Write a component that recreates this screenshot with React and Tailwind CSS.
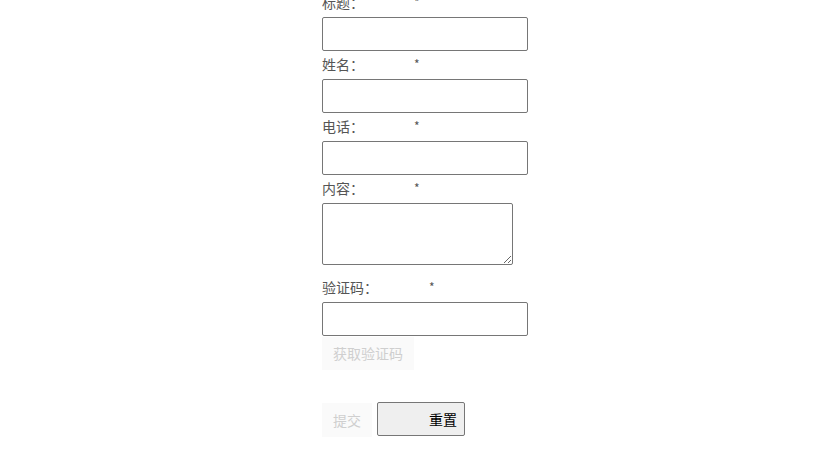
import React from 'react';

const font = { fontFamily: '"Noto Sans CJK SC", "Noto Sans", sans-serif' };

const Label = ({ text, gap = 'ml-[50px]' }) => (
  <div className="h-[28px] flex items-center pb-[2px] text-[14px] text-[#555]">
    <span>{text}</span>
    <span className={`${gap} text-[12px] text-[#555]`}>*</span>
  </div>
);

const Input = () => (
  <input
    type="text"
    className="block w-[206px] h-[34px] border border-[#767676] rounded-[2px] bg-white px-1 outline-none"
  />
);

export default function App() {
  return (
    <div className="w-[817px] h-[456px] overflow-hidden bg-white" style={font}>
      <div className="pl-[322px] mt-[-11px] flex flex-col">
        <Label text="标题：" />
        <Input />
        <Label text="姓名：" />
        <Input />
        <Label text="电话：" />
        <Input />
        <Label text="内容：" />
        <textarea className="block w-[191px] h-[62px] border border-[#767676] rounded-[2px] bg-white outline-none" />
        <div className="h-[9px]" />
        <Label text="验证码：" gap="ml-[51px]" />
        <Input />
        <div className="flex">
          <button className="mt-[1px] w-[92px] h-[33px] bg-[#fafafa] text-[#cfcfcf] text-[14px]">获取验证码</button>
        </div>
        <div className="flex items-start mt-[32px] gap-[5px]">
          <button className="mt-[1px] w-[50px] h-[34px] bg-[#fafafa] text-[#cfcfcf] text-[14px]">提交</button>
          <button className="w-[88px] h-[34px] bg-[#efefef] border border-[#767676] rounded-[2px] text-black text-[14px] text-right pr-[7px]">
            重置
          </button>
        </div>
      </div>
    </div>
  );
}
